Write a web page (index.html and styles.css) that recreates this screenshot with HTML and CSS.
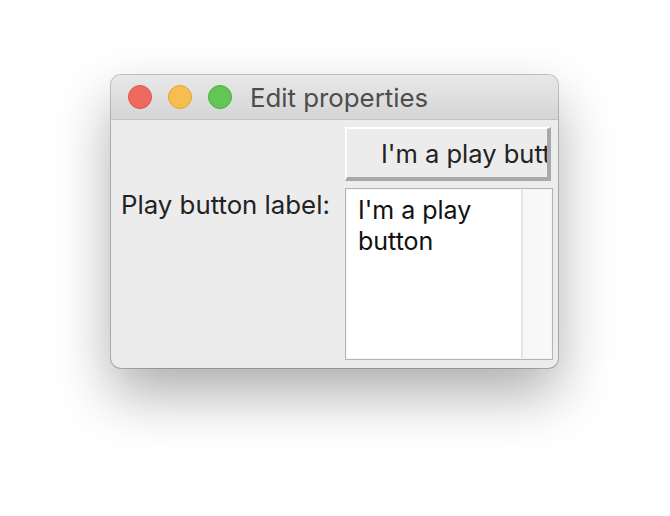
FILE: index.html
```html
<!DOCTYPE html>
<html>
<head>
<meta charset="utf-8">
<link rel="stylesheet" href="styles.css">
</head>
<body>
<div class="window">
  <div class="titlebar">
    <div class="lights">
      <span class="light red"></span>
      <span class="light yellow"></span>
      <span class="light green"></span>
    </div>
    <div class="title">Edit properties</div>
  </div>
  <div class="content">
    <div class="label">Play button label:</div>
    <div class="fields">
      <div class="button"><span class="button-text">I'm a play button</span></div>
      <div class="textarea">
        <div class="text">I'm a play<br>button</div>
        <div class="scroll"></div>
      </div>
    </div>
  </div>
</div>
</body>
</html>
```
FILE: styles.css
```css
html, body {
  margin: 0;
  padding: 0;
  background: #ffffff;
  width: 670px;
  height: 516px;
  overflow: hidden;
}
body {
  font-family: Inter, "Noto Sans", sans-serif;
}
.window {
  margin: 75px 0 0 111px;
  width: 447px;
  height: 293px;
  box-sizing: border-box;
  border-radius: 10px;
  background: #ececec;
  box-shadow: 0 0 0 1px rgba(0,0,0,0.22), 0 26px 56px rgba(0,0,0,0.32);
  overflow: hidden;
  display: flex;
  flex-direction: column;
}
.titlebar {
  height: 44px;
  flex: none;
  background: linear-gradient(#e8e8e8, #d5d5d5);
  border-bottom: 1px solid #c2c2c2;
  display: flex;
  align-items: center;
  padding-left: 17px;
}
.lights {
  display: flex;
  gap: 16px;
}
.light {
  width: 24px;
  height: 24px;
  border-radius: 50%;
  box-sizing: border-box;
}
.red { background: #ee6a5f; border: 1px solid #d9574c; }
.yellow { background: #f6be4f; border: 1px solid #dea63a; }
.green { background: #62c655; border: 1px solid #4fae43; }
.title {
  margin-left: 18px;
  font-size: 25.8px;
  color: #4d4d4d;
  line-height: 30px;
  padding-top: 2px;
}
.content {
  flex: 1;
  display: flex;
  padding: 7px 5px 7px 10px;
  gap: 14px;
}
.label {
  padding-top: 63px;
  font-size: 25.8px;
  line-height: 30px;
  color: #222;
  width: 210px;
  white-space: nowrap;
}
.fields {
  display: flex;
  flex-direction: column;
  gap: 7px;
  width: 208px;
}
.button {
  width: 206px;
  height: 54px;
  box-sizing: border-box;
  background: #ececec;
  border-top: 2px solid #ffffff;
  border-left: 2px solid #ffffff;
  border-right: 4px solid #a8a8a8;
  border-bottom: 4px solid #a8a8a8;
  overflow: hidden;
  white-space: nowrap;
  display: flex;
  align-items: center;
  padding-left: 34px;
  font-size: 25.5px;
  color: #222;
}
.textarea {
  width: 208px;
  height: 172px;
  box-sizing: border-box;
  border: 1px solid #b4b4b4;
  padding: 1px;
  background: #f4f4f4;
  display: flex;
}
.text {
  flex: 1;
  background: #ffffff;
  border-right: 2px solid #e4e4e4;
  padding: 5px 11px;
  font-size: 25px;
  line-height: 31px;
  color: #111;
}
.scroll {
  width: 28px;
  background: #f8f8f8;
}
```
